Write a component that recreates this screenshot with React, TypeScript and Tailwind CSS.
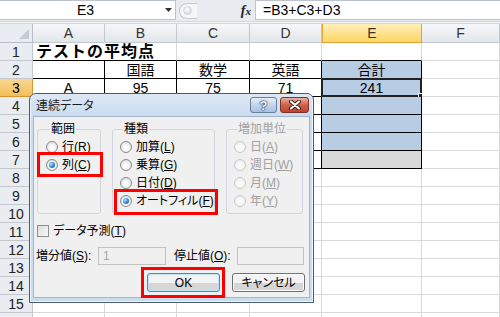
import React from 'react'

const COLS = ['A', 'B', 'C', 'D', 'E', 'F']
const ROWS = Array.from({ length: 16 }, (_, i) => i + 1)

// table contents (A..E)
const TABLE: Record<number, string[]> = {
    2: ['', '国語', '数学', '英語', '合計'],
    3: ['A', '95', '75', '71', '241'],
}

const Key = ({ k }: { k: string }) => <span className="underline underline-offset-[1px]">{k}</span>

const Radio = ({ checked, disabled }: { checked?: boolean; disabled?: boolean }) => (
    <span
        className={`w-[12px] h-[12px] rounded-full border flex items-center justify-center shrink-0 ${
            disabled
                ? 'border-[#c9c9c9] bg-[radial-gradient(circle_at_50%_60%,#fbfbfb_30%,#e6e6e6)]'
                : 'border-[#8a8a8a] bg-[radial-gradient(circle_at_50%_60%,#ffffff_25%,#cfcfcf)]'
        }`}
    >
        {checked && (
            <span className="w-[6px] h-[6px] rounded-full bg-[radial-gradient(circle_at_35%_35%,#b5e2ff,#2c82d6_55%,#0a4691)]" />
        )}
    </span>
)

const RadioRow = ({ label, checked, disabled }: { label: React.ReactNode; checked?: boolean; disabled?: boolean }) => (
    <div className={`h-[18px] flex items-center gap-[4px] whitespace-nowrap ${disabled ? 'text-[#a0a0a0]' : 'text-black'}`}>
        <Radio checked={checked} disabled={disabled} />
        <span className="leading-none">{label}</span>
    </div>
)

const Button = ({ children, focused }: { children: React.ReactNode; focused?: boolean }) => (
    <div
        className={`w-[73px] h-[19px] rounded-[3px] border flex items-center justify-center text-[12px] leading-none ${
            focused
                ? 'border-[#3c8fc8] shadow-[inset_0_0_0_1px_#bfe6f8]'
                : 'border-[#707070] shadow-[inset_0_0_0_1px_#fcfcfc]'
        } bg-linear-to-b from-[#f3f3f3] from-50% to-[#d6d6d6] to-50%`}
    >
        {children}
    </div>
)

const cellBorder = (row: number, col: number) => {
    const inTable = row >= 2 && row <= 7 && col <= 4
    const right = inTable ? 'border-r-black' : 'border-r-[#d9d9d9]'
    const bottom = inTable || (row === 1 && col <= 4) ? 'border-b-black' : 'border-b-[#d9d9d9]'
    return `${right} ${bottom}`
}

const cellBg = (row: number, col: number) => {
    if (col !== 4) return 'bg-white'
    if (row >= 2 && row <= 6) return 'bg-[#b8cce4]'
    if (row === 7) return 'bg-[#d9d9d9]'
    return 'bg-white'
}

export default function App() {
    return (
        <div className="relative w-[500px] h-[317px] overflow-hidden bg-white font-['Liberation_Sans','Noto_Sans_CJK_JP',sans-serif] text-black">
            {/* formula bar */}
            <div className="flex h-[21px] bg-[#e8ebf0]">
                <div className="w-[176px] h-[20px] bg-white border-y border-r border-[#bcc3cc] flex items-center">
                    <span className="flex-1 text-center text-[14px] leading-none pl-[6px]">E3</span>
                    <svg className="w-[7px] h-[4px] mr-[3px]" viewBox="0 0 7 4">
                        <path d="M0 0h7L3.5 4z" fill="#333" />
                    </svg>
                </div>
                <div className="w-[79px] flex items-center">
                    <div className="ml-[3px] w-[18px] h-[16px] rounded-l-full border-l border-y border-[#c3c9d1] bg-[#f5f6f8] flex items-center pl-[3px]">
                        <span className="w-[9px] h-[9px] rounded-full bg-[radial-gradient(circle_at_40%_35%,#ffffff,#c7ccd3)] border border-[#d2d6dc]" />
                    </div>
                    <span className="ml-auto mr-[4px] font-['Liberation_Serif',serif] italic font-bold text-[14px] leading-none text-[#222]">
                        f<span className="text-[11px]">x</span>
                    </span>
                </div>
                <div className="flex-1 h-[20px] bg-white border-y border-l border-[#bcc3cc] flex items-center pl-[7px] text-[14px] leading-none">
                    =B3+C3+D3
                </div>
            </div>
            <div className="h-[3px] bg-[#f4f5f7] border-t border-b border-[#d3d7dd]" />

            {/* sheet grid */}
            <div className="grid grid-cols-[33px_72px_72px_73px_72px_100px_78px]">
                <div className="h-[19px] bg-[#e9ecf0] border-r border-b border-[#b9bec6] flex items-end justify-end p-[3px]">
                    <svg className="w-[10px] h-[10px]" viewBox="0 0 10 10">
                        <path d="M10 0v10H0z" fill="#c6cbd2" />
                    </svg>
                </div>
                {COLS.map((c, i) =>
                    i === 4 ? (
                        <div
                            key={c}
                            className="h-[19px] bg-linear-to-b from-[#fff0b8] to-[#fbd660] border-x border-b border-[#e3a23b] flex items-center justify-center text-[14px] leading-none text-[#333]"
                        >
                            {c}
                        </div>
                    ) : (
                        <div
                            key={c}
                            className="h-[19px] bg-linear-to-b from-[#f6f7f9] to-[#e3e6ea] border-r border-b border-[#c3c8cf] flex items-center justify-center text-[14px] leading-none text-[#333]"
                        >
                            {c}
                        </div>
                    )
                )}

                {ROWS.map(row => (
                    <React.Fragment key={row}>
                        <div
                            className={`h-[18px] border-r border-b flex items-center justify-center text-[14px] leading-none ${
                                row === 3
                                    ? 'bg-linear-to-b from-[#f9d892] to-[#f2bf59] border-[#d9952e] text-black'
                                    : 'bg-[#e9ecf0] border-[#c3c8cf] text-[#222]'
                            }`}
                        >
                            {row < 16 ? row : ''}
                        </div>
                        {row === 1 ? (
                            <>
                                <div className="col-span-2 h-[18px] border-r border-b border-r-[#d9d9d9] border-b-black flex items-center pl-[3px] text-[16px] font-bold tracking-[1px] leading-none whitespace-nowrap">
                                    テストの平均点
                                </div>
                                {[2, 3, 4, 5].map(col => (
                                    <div key={col} className={`h-[18px] border-r border-b ${cellBorder(1, col)} bg-white`} />
                                ))}
                            </>
                        ) : (
                            COLS.map((_, col) => (
                                <div
                                    key={col}
                                    className={`relative h-[18px] border-r border-b ${cellBorder(row, col)} ${cellBg(row, col)} flex items-center justify-center pt-[1px] text-[14px] leading-none whitespace-nowrap`}
                                >
                                    {TABLE[row]?.[col]}
                                    {row === 3 && col === 4 && (
                                        <span className="absolute -left-[1px] -top-[1px] -right-[1px] -bottom-[1px] border-2 border-[#222]">
                                            <span className="absolute -right-[3px] -bottom-[3px] w-[5px] h-[5px] bg-[#222] border border-white" />
                                        </span>
                                    )}
                                </div>
                            ))
                        )}
                    </React.Fragment>
                ))}
            </div>

            {/* 連続データ dialog */}
            <div className="absolute left-[29px] top-[93px] w-[285px] h-[210px] rounded-t-[7px] border border-[#4a5a70] bg-[#cadcf0] flex flex-col px-[4px] pb-[4px] text-[12px] [font-feature-settings:'palt'] font-['Liberation_Sans','Noto_Sans_CJK_JP',sans-serif] shadow-[inset_0_0_0_1px_#eef5fc]">
                <div className="h-[22px] flex items-start bg-linear-to-b from-[#dde8f5] to-[#cadcf0] -mx-[3px] pl-[5px] pr-[3px] rounded-t-[6px]">
                    <span className="mt-[6px] text-[12px] leading-none text-[#1b1b1b]">連続データ</span>
                    <div className="ml-auto mt-[3px] flex gap-[3px]">
                        <div className="w-[27px] h-[16px] rounded-[3px] border border-[#6c7f99] bg-linear-to-b from-[#e6effa] via-[#c3d5ec] to-[#a8c0e0] flex items-center justify-center">
                            <span className="text-white font-bold text-[13px] leading-none [text-shadow:0_0_1px_#1e3557,0_0_1px_#1e3557,0_0_2px_#1e3557]">
                                ?
                            </span>
                        </div>
                        <div className="w-[29px] h-[16px] rounded-[3px] border border-[#7a3226] bg-linear-to-b from-[#eab0a3] via-[#d0604a] to-[#c2432b] flex items-center justify-center">
                            <svg className="w-[14px] h-[10px]" viewBox="0 0 14 10">
                                <path d="M3 1.5l8 7M11 1.5l-8 7" stroke="#3a1a14" strokeWidth="4" strokeLinecap="round" />
                                <path d="M3 1.5l8 7M11 1.5l-8 7" stroke="#ffffff" strokeWidth="2.2" strokeLinecap="round" />
                            </svg>
                        </div>
                    </div>
                </div>

                <div className="flex-1 bg-[#f0f0f0] border border-[#a3b5ca] -mx-px flex flex-col pt-[4px]">
                    {/* group boxes */}
                    <div className="flex pl-[3px] gap-[11px]">
                        <fieldset className="w-[64px] h-[93px] border border-[#d0d6dc] rounded-[3px] pl-[8px]">
                            <legend className="ml-[4px] px-[1px] leading-[16px]">範囲</legend>
                            <div className="pt-[1px]">
                                <RadioRow label={<>行(<Key k="R" />)</>} />
                                <RadioRow label={<>列(<Key k="C" />)</>} checked />
                            </div>
                        </fieldset>
                        <fieldset className="w-[103px] h-[93px] border border-[#d0d6dc] rounded-[3px] pl-[7px]">
                            <legend className="ml-[3px] px-[1px] leading-[16px]">種類</legend>
                            <div className="pt-[1px]">
                                <RadioRow label={<>加算(<Key k="L" />)</>} />
                                <RadioRow label={<>乗算(<Key k="G" />)</>} />
                                <RadioRow label={<>日付(<Key k="D" />)</>} />
                                <RadioRow label={<>オートフィル(<Key k="F" />)</>} checked />
                            </div>
                        </fieldset>
                        <fieldset className="w-[77px] h-[93px] border border-[#d0d6dc] rounded-[3px] pl-[7px]">
                            <legend className="ml-[3px] px-[1px] leading-[16px] text-[#a0a0a0]">増加単位</legend>
                            <div className="pt-[1px]">
                                <RadioRow label={<>日(<Key k="A" />)</>} disabled />
                                <RadioRow label={<>週日(<Key k="W" />)</>} disabled />
                                <RadioRow label={<>月(<Key k="M" />)</>} disabled />
                                <RadioRow label={<>年(<Key k="Y" />)</>} disabled />
                            </div>
                        </fieldset>
                    </div>

                    {/* trend checkbox */}
                    <div className="mt-[9px] h-[16px] pl-[3px] flex items-center gap-[4px] whitespace-nowrap">
                        <span className="w-[12px] h-[12px] border border-[#8e8f8f] bg-[linear-gradient(135deg,#dcdcdc,#f9f9f9)]" />
                        <span className="leading-none">
                            データ予測(<Key k="T" />)
                        </span>
                    </div>

                    {/* step / stop values */}
                    <div className="mt-[8px] h-[18px] pl-[2px] flex items-center whitespace-nowrap">
                        <span className="w-[62px] leading-none">
                            増分値(<Key k="S" />):
                        </span>
                        <div className="w-[68px] h-[18px] border border-[#c2c2c2] bg-[#f0f0f0] flex items-center pl-[4px] text-[#a8a8a8] leading-none">
                            1
                        </div>
                        <span className="ml-[8px] w-[63px] leading-none">
                            停止値(<Key k="O" />):
                        </span>
                        <div className="w-[67px] h-[18px] border border-[#c2c2c2] bg-[#f0f0f0]" />
                    </div>

                    {/* buttons */}
                    <div className="mt-[8px] flex justify-end gap-[12px] pr-[4px]">
                        <Button focused>OK</Button>
                        <Button>キャンセル</Button>
                    </div>
                </div>
            </div>

            {/* red annotation frames */}
            <div className="absolute left-[37px] top-[152px] w-[66px] h-[25px] border-[3px] border-[#ff0000]" />
            <div className="absolute left-[114px] top-[189px] w-[104px] h-[26px] border-[3px] border-[#ff0000]" />
            <div className="absolute left-[141px] top-[267px] w-[84px] h-[31px] border-[3px] border-[#ff0000]" />
        </div>
    )
}
